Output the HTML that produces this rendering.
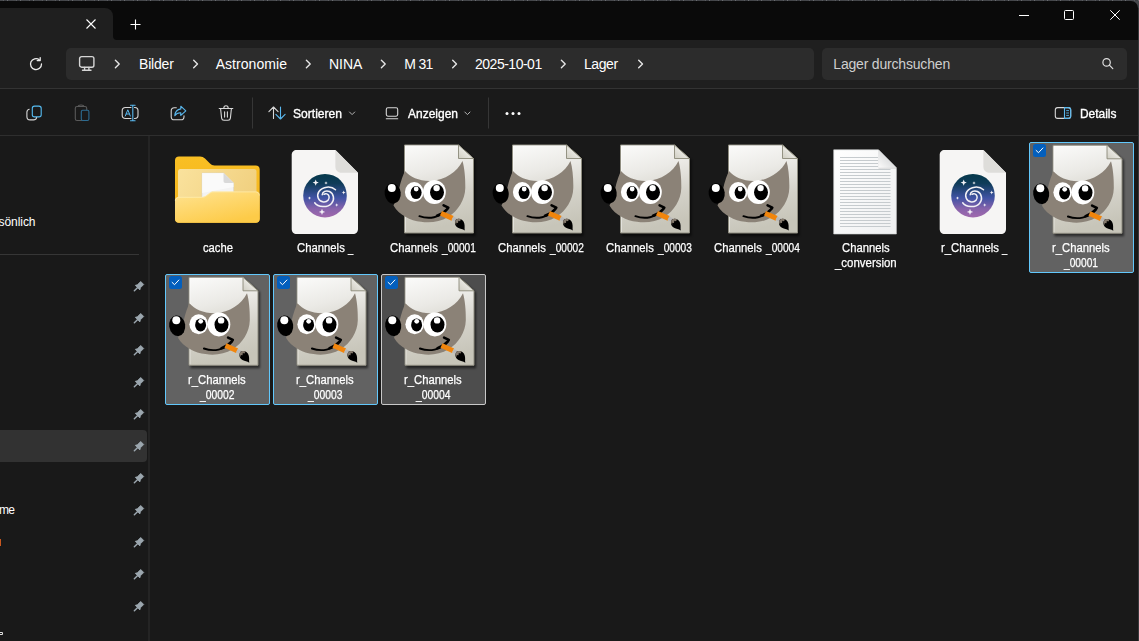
<!DOCTYPE html>
<html lang="de">
<head>
<meta charset="utf-8">
<title>Lager</title>
<style>
html,body{margin:0;padding:0;background:#191919;}
body{width:1139px;height:641px;overflow:hidden;font-family:"Liberation Sans",sans-serif;}
#win{position:relative;width:1139px;height:641px;overflow:hidden;background:#191919;}
.abs{position:absolute;}
.t{position:absolute;white-space:pre;font-family:"Liberation Sans",sans-serif;}
svg{position:absolute;overflow:visible;}
.sel{position:absolute;width:103px;height:129px;border:1px solid #62c8fc;background:#626262;border-radius:2px;}
.chk{position:absolute;width:13px;height:13px;background:#0b5cc4;border-radius:2px;}
</style>
</head>
<body>
<div id="win">
<!-- title bar -->
<div class="abs" style="left:0;top:0;width:1139px;height:40px;background:#0a0a0a;"></div>
<div class="abs" style="left:0;top:0;width:1139px;height:8px;background:#45474b;"></div>
<div class="abs" style="left:-10px;top:1px;width:1148px;height:30px;background:#0a0a0a;border-radius:0 7px 0 0;"></div>
<div class="abs" style="left:0;top:0;width:1139px;height:1px;background:repeating-linear-gradient(90deg,#47494d 0 3px,#5a5c60 3px 4px,#3c3e42 4px 7px,#6a6c70 7px 8px,#44464a 8px 13px);"></div>
<!-- active tab -->
<div class="abs" style="left:-10px;top:8px;width:123px;height:34px;background:#1f1f1f;border-radius:8px 8px 0 0;"></div>
<svg style="left:113px;top:36px" width="4" height="4" viewBox="0 0 4 4"><path d="M0 0 A4 4 0 0 0 4 4 L0 4Z" fill="#1f1f1f"/></svg>
<!-- nav bar + toolbar background -->
<div class="abs" style="left:0;top:40px;width:1139px;height:48px;background:#1f1f1f;"></div>
<div class="abs" style="left:0;top:88px;width:1139px;height:1px;background:#333;"></div>
<div class="abs" style="left:0;top:89px;width:1139px;height:46px;background:#1a1a1a;"></div>
<div class="abs" style="left:0;top:135px;width:1139px;height:1px;background:#2e2e2e;"></div>
<!-- tab close / new tab -->
<svg style="left:86px;top:19px" width="10" height="10" viewBox="0 0 10 10"><path d="M0.5 0.5L9.5 9.5M9.5 0.5L0.5 9.5" stroke="#fff" stroke-width="1.1" fill="none"/></svg>
<svg style="left:130px;top:19px" width="11" height="11" viewBox="0 0 11 11"><path d="M5.5 0.5V10.5M0.5 5.5H10.5" stroke="#fff" stroke-width="1.1" fill="none"/></svg>
<!-- window controls -->
<svg style="left:1019px;top:15px" width="10" height="1" viewBox="0 0 10 1"><rect width="10" height="1" fill="#fff"/></svg>
<svg style="left:1064px;top:10px" width="10" height="10" viewBox="0 0 10 10"><rect x="0.5" y="0.5" width="9" height="9" rx="1" fill="none" stroke="#fff" stroke-width="1"/></svg>
<svg style="left:1110px;top:10px" width="10" height="10" viewBox="0 0 10 10"><path d="M0.3 0.3L9.7 9.7M9.7 0.3L0.3 9.7" stroke="#fff" stroke-width="1" fill="none"/></svg>
<!-- address + search -->
<div class="abs" style="left:66px;top:48px;width:748px;height:32px;background:#2c2c2c;border-radius:5px;"></div>
<div class="abs" style="left:822px;top:48px;width:305px;height:32px;background:#2c2c2c;border-radius:5px;"></div>
<!-- refresh -->
<svg style="left:29px;top:57px" width="14" height="14" viewBox="0 0 14 14"><path d="M12.500 7A5.500 5.500 0 1 1 10.300 2.700" fill="none" stroke="#ececec" stroke-width="1.300" stroke-linecap="round"/><path d="M11.200 0.600V3.600H8.200" fill="none" stroke="#ececec" stroke-width="1.300" stroke-linecap="round" stroke-linejoin="round"/></svg>
<!-- monitor -->
<svg style="left:79px;top:56px" width="16" height="15" viewBox="0 0 16 15"><rect x="0.6" y="0.6" width="14.3" height="10.6" rx="2" fill="none" stroke="#d6d6d6" stroke-width="1.400"/><path d="M3.5 14.2H12M5.6 11.4V14M9.9 11.4V14" stroke="#d6d6d6" stroke-width="1.400" fill="none" stroke-linecap="round"/></svg>
<!-- chevrons -->
<svg style="left:0;top:0" width="1139" height="100" viewBox="0 0 1139 100"><g fill="none" stroke="#e6e6e6" stroke-width="1.400" stroke-linecap="round" stroke-linejoin="round" transform="translate(0.400 0)">
<path d="M115 60.3l3.8 3.7l-3.8 3.7"/><path d="M193.3 60.3l3.8 3.7l-3.8 3.7"/><path d="M306 60.3l3.8 3.7l-3.8 3.7"/><path d="M381 60.3l3.8 3.7l-3.8 3.7"/><path d="M452.3 60.3l3.8 3.7l-3.8 3.7"/><path d="M561 60.3l3.8 3.7l-3.8 3.7"/><path d="M638.3 60.3l3.8 3.7l-3.8 3.7"/>
</g>
<!-- search icon -->
<g fill="none" stroke="#e0e0e0" stroke-width="1.2" stroke-linecap="round"><circle cx="1106.6" cy="62.4" r="3.7"/><path d="M1109.4 65.2L1112.8 68.6"/></g>
</svg>
<!-- toolbar icons -->
<svg style="left:0;top:0" width="1139" height="140" viewBox="0 0 1139 140">
<!-- copy -->
<g fill="none" stroke-width="1.1" stroke-linejoin="round" stroke-linecap="round">
<rect x="32.300" y="106.100" width="8.900" height="10.800" rx="2.200" stroke="#56bdf3"/>
<path d="M29.2 109.2c-1.6 0.3-2.3 1.4-2.3 3v4.6c0 1.9 1.2 3.1 3.1 3.1h3.6c1.6 0 2.7-0.8 3-2.3" stroke="#d8d8d8"/>
<!-- paste (disabled) -->
<rect x="75.300" y="106.500" width="11.400" height="14" rx="1.800" stroke="#5a5a5a"/>
<path d="M78.200 106.500c0-1 1-1.500 2.800-1.500s2.800 0.500 2.800 1.500" stroke="#5a5a5a"/>
<rect x="81.300" y="110.300" width="7.600" height="10.200" rx="1.400" stroke="#2d6b90" fill="#1a1a1a"/>
<!-- rename -->
<path d="M131 107.5h-5.5c-2 0-3.3 1.2-3.3 3.2v4.6c0 2 1.3 3.2 3.3 3.2h5.5M134.5 107.5h0.4c2 0 3.1 1.2 3.1 3.2v4.6c0 2-1.1 3.2-3.1 3.2h-0.4" stroke="#d8d8d8"/>
<path d="M130.5 105.3h4.6M130.5 120.7h4.6M132.8 105.3v15.4" stroke="#5ab8ee"/>
<path d="M125.3 116l2.5-6.2l2.5 6.2M126.2 114h3.2" stroke="#5ab8ee" stroke-width="1"/>
<!-- share -->
<path d="M176.300 107.800h-2c-2 0-3.100 1.100-3.100 3.100v5.800c0 2 1.100 3.100 3.100 3.100h6.600c2 0 3.100-1.100 3.100-3.100v-0.800" stroke="#d8d8d8"/>
<path d="M180.8 106.2l5 4.6l-5 4.6v-2.6c-2.8-0.1-4.6 0.8-6 2.9c0.3-3.6 2.2-6.3 6-6.8z" stroke="#5ab8ee"/>
<!-- delete -->
<path d="M219.2 108.5h13.6M223.8 108.2c0-1.6 1-2.5 2.2-2.5s2.2 0.9 2.2 2.5M220.6 108.8l1 9.3c0.2 1.4 1 2.1 2.3 2.1h4.2c1.3 0 2.1-0.7 2.3-2.1l1-9.3M224.6 111.8v5.3M227.4 111.8v5.3" stroke="#d8d8d8"/>
<!-- sort -->
<path d="M273.500 107l-4.600 4.600M273.500 107l4.600 4.600M273.500 107v11.500" stroke="#d8d8d8"/>
<path d="M280.500 119l-4.600-4.600M280.500 119l4.600-4.600M280.500 119v-12" stroke="#5ab8ee"/>
<!-- view -->
<rect x="386.300" y="107.800" width="11.400" height="8.400" rx="1.600" stroke="#d8d8d8"/>
<path d="M386.300 118.800h11.400" stroke="#d8d8d8"/>
<!-- small chevrons -->
<path d="M349.5 112l2.6 2.6l2.6-2.6M464.8 112l2.6 2.6l2.6-2.6" stroke="#b4b4b4" stroke-width="1"/>
<!-- details -->
<rect x="1055.3" y="107.6" width="15.4" height="10.8" rx="2.4" stroke="#d8d8d8"/>
<path d="M1064.5 107.6h3.8c1.5 0 2.4 0.9 2.4 2.4v6c0 1.5-0.9 2.4-2.4 2.4h-3.8z" stroke="#5ab8ee"/>
<path d="M1066.6 110.6h2M1066.6 113h2M1066.6 115.4h2" stroke="#5ab8ee" stroke-width="0.9"/>
</g>
<circle cx="507" cy="113.500" r="1.500" fill="#fff"/><circle cx="513" cy="113.500" r="1.500" fill="#fff"/><circle cx="519" cy="113.500" r="1.500" fill="#fff"/>
<rect x="252" y="97.500" width="1" height="31" fill="#363636"/><rect x="488" y="97.500" width="1" height="31" fill="#363636"/>
</svg>
<div class="abs" style="left:1138px;top:8px;width:1px;height:633px;background:#38393c;"></div>
<!-- sidebar -->
<div class="abs" style="left:0;top:136px;width:148px;height:505px;background:#191919;"></div>
<div class="abs" style="left:148px;top:136px;width:2px;height:505px;background:#242424;"></div>
<div class="abs" style="left:0;top:254px;width:139px;height:1px;background:#363636;"></div>
<div class="abs" style="left:-6px;top:430px;width:153px;height:32px;background:#323232;border-radius:4px;"></div>
<svg style="left:0;top:0" width="160" height="641" viewBox="0 0 160 641">
<defs><g id="pin"><g transform="translate(3.900 2.300) scale(0.860) translate(-3 -2)"><path d="M1.200 0.300L5.100 -3.600L8.600 -0.100L4.700 3.800L4.100 6.200L-1.200 0.900Z" fill="#9ba6ae" stroke="#9ba6ae" stroke-width="1" stroke-linejoin="round"/><path d="M1.600 3.300L-2.300 7.200" fill="none" stroke="#9ba6ae" stroke-width="1.700" stroke-linecap="round"/></g></g></defs>
<use href="#pin" x="135" y="284"/><use href="#pin" x="135" y="316"/><use href="#pin" x="135" y="348"/><use href="#pin" x="135" y="380"/><use href="#pin" x="135" y="412"/><use href="#pin" x="135" y="444"/><use href="#pin" x="135" y="476"/><use href="#pin" x="135" y="508"/><use href="#pin" x="135" y="540"/><use href="#pin" x="135" y="572"/><use href="#pin" x="135" y="604"/>
<rect x="0" y="539" width="1" height="7" fill="#c9571f"/>
<path d="M0 632.500h2.500v2h-2.500" fill="none" stroke="#ddd" stroke-width="1"/>
</svg>
<svg style="left:0;top:0" width="0" height="0">
<defs>
<linearGradient id="pg" x1="0" y1="0" x2="0.2" y2="1"><stop offset="0" stop-color="#fbfbfa"/><stop offset="0.35" stop-color="#ebeae6"/><stop offset="0.7" stop-color="#d3d1c8"/><stop offset="1" stop-color="#c7c5b9"/></linearGradient>
<linearGradient id="pgfold" x1="0" y1="1" x2="1" y2="0"><stop offset="0" stop-color="#cfcdc1"/><stop offset="0.450" stop-color="#e6e5df"/><stop offset="1" stop-color="#f2f1ec"/></linearGradient>
<filter id="sh" x="-20%" y="-20%" width="150%" height="150%"><feGaussianBlur stdDeviation="1.3"/></filter>
<linearGradient id="gal" x1="0" y1="0" x2="0" y2="1"><stop offset="0" stop-color="#05384a"/><stop offset="0.22" stop-color="#0f3c59"/><stop offset="0.55" stop-color="#4053a4"/><stop offset="0.8" stop-color="#8763ab"/><stop offset="1" stop-color="#a169ad"/></linearGradient>
<linearGradient id="fback" x1="0" y1="0" x2="0" y2="1"><stop offset="0" stop-color="#f9bf23"/><stop offset="1" stop-color="#f2b21c"/></linearGradient>
<linearGradient id="finner" x1="0" y1="0" x2="1" y2="0.3"><stop offset="0" stop-color="#fae29d"/><stop offset="1" stop-color="#f1d181"/></linearGradient>
<linearGradient id="ffront" x1="0" y1="0" x2="0.6" y2="1"><stop offset="0" stop-color="#ffe391"/><stop offset="1" stop-color="#fdcb48"/></linearGradient>
<linearGradient id="tdoc" x1="0" y1="0" x2="1" y2="1"><stop offset="0" stop-color="#ffffff"/><stop offset="1" stop-color="#eff0f1"/></linearGradient>
<linearGradient id="tfold" x1="0" y1="1" x2="1" y2="0"><stop offset="0" stop-color="#fbfbfb"/><stop offset="0.5" stop-color="#dfe0e1"/><stop offset="1" stop-color="#c8c9ca"/></linearGradient>

<symbol id="gimp" viewBox="0 0 96 96" overflow="visible">
 <path d="M21 4H75L90.500 17V93H21Z" fill="#000" opacity="0.55" filter="url(#sh)"/>
 <path d="M19.500 2H73.500L88.500 15.500V90H19.500Z" fill="url(#pg)" stroke="#8f8d80" stroke-width="1" stroke-linejoin="round"/>
 <path d="M20.500 89V3H73.600" fill="none" stroke="#fff" stroke-opacity="0.45" stroke-width="1"/>
 <path d="M73.500 2V15.500H88.500Z" fill="url(#pgfold)" stroke="#8a8978" stroke-width="0.900" stroke-linejoin="round"/>
 <path d="M20 28C25 34 35 38.500 46 38C60 37 72 29 77.500 18C79.500 25 80.500 35 80.300 45C80 57 73 68 63 74C55 79 45 80.200 36 78.800C25.500 77.800 14 72 8.500 62.500L13.500 50C14.500 42 17.500 33 20 28Z" fill="#8b8277"/>
 <ellipse cx="7.700" cy="50.400" rx="8" ry="10.300" fill="#000" transform="rotate(-8 7.700 50.400)"/>
 <circle cx="6.800" cy="44.900" r="4" fill="#fff"/>
 <ellipse cx="29.200" cy="49" rx="9.300" ry="10" fill="#fff"/>
 <ellipse cx="49.400" cy="49" rx="11.400" ry="12.100" fill="#fff"/>
 <ellipse cx="31.100" cy="49.600" rx="5.500" ry="6.500" fill="#000"/>
 <circle cx="31.200" cy="46" r="2.400" fill="#fff"/>
 <ellipse cx="52" cy="49.300" rx="7" ry="8" fill="#000"/>
 <circle cx="51.600" cy="45.100" r="3.200" fill="#fff"/>
 <path d="M34.400 73.200C43 76.200 55.500 75.500 62.600 65.800" fill="none" stroke="#000" stroke-width="1.900" stroke-linecap="round"/><path d="M52 72.800C56.500 71.300 60 68.800 62.600 65.800" fill="none" stroke="#000" stroke-width="2.500" stroke-linecap="round"/>
 <path d="M58.600 62.300L63.300 64.600" fill="none" stroke="#000" stroke-width="2.600" stroke-linecap="round"/>
 <path d="M56 70.200L67.600 75.400" stroke="#f1850c" stroke-width="5" fill="none"/>
 <path d="M67.400 75.300L71.400 77.300" stroke="#b9b9b9" stroke-width="3.800" fill="none"/>
 <path d="M71 76.500C74 74.500 78.500 76.500 79.300 80.500C80 83.500 79.300 85 79.800 87.500C77.500 85.700 75.500 85.800 73 84.700C70 83.300 69 79.500 71 76.500Z" fill="#000"/>
 <path d="M70.600 77.200C72 75.700 74.300 75.300 76 76.300L75 78.200L73.300 77.800L73 80L71.200 79.800L71.300 81.800C70 80.500 69.800 78.500 70.600 77.200Z" fill="#857a6d"/>
</symbol>

<symbol id="galaxy" viewBox="0 0 96 96" overflow="visible">
 <path d="M19.700 7.100H58.400L81 29.700V86c0 3-2 5-5 5H19.700c-3 0-5-2-5-5V12.100c0-3 2-5 5-5Z" fill="#f6f5f4"/>
 <path d="M58.400 7.100L81 29.700H64.400c-3.600 0-6-2.400-6-6Z" fill="#deddda"/>
 <circle cx="48" cy="52.700" r="21.800" fill="url(#gal)"/>
 <g fill="none" stroke="#f3f1f6" stroke-width="1.500" stroke-linecap="round">
  <path d="M58.500 46.800C54 42.500 45.500 43.500 42 48.500C39 53 41.500 58.500 46.500 59C50.500 59.300 52.800 56 52 53.200C51.300 50.800 48.600 50 47 51.300"/>
  <path d="M37.700 59.800C41 64.500 50.500 65 54.500 60.500C58 56.500 56.700 50.500 52.500 48.500C49 46.900 45.500 48.800 45.200 51.800"/>
 </g>
 <g fill="#f3f1f6">
  <path d="M38.700 36.500l0.900 2.200l2.200 0.900l-2.200 0.900l-0.900 2.200l-0.900-2.200l-2.200-0.900l2.200-0.900Z"/>
  <path d="M45 65.700l0.900 2.300l2.300 0.900l-2.300 0.900l-0.900 2.300l-0.900-2.300l-2.300-0.900l2.300-0.900Z"/>
  <path d="M49 38.200l0.500 1.200l1.200 0.500l-1.200 0.500l-0.500 1.200l-0.500-1.200l-1.200-0.500l1.200-0.500Z"/>
  <path d="M66.700 47.500l0.600 1.400l1.400 0.600l-1.400 0.600l-0.600 1.400l-0.600-1.400l-1.400-0.600l1.400-0.600Z"/>
  <path d="M32.500 53.500l0.500 1.100l1.100 0.500l-1.100 0.500l-0.500 1.100l-0.500-1.100l-1.100-0.500l1.100-0.500Z"/>
  <path d="M59.700 60.300l0.500 1.200l1.200 0.500l-1.200 0.500l-0.500 1.200l-0.500-1.200l-1.200-0.500l1.200-0.500Z"/>
 </g>
</symbol>

<symbol id="txt" viewBox="0 0 96 96" overflow="visible">
 <path d="M16.700 6.800H61.500L79.400 24.700V91H16.700Z" fill="url(#tdoc)" stroke="#cfd0d1" stroke-width="0.6"/>
 <g stroke="#c6cbce" stroke-width="1"><path d="M23 14.5H61M23 17.5H61M23 20.5H61M23 23.5H61M23 26.5H73.5M23 29.5H73.5M23 32.5H73.5M23 35.5H73.5M23 38.5H73.5M23 41.5H73.5M23 44.5H73.5M23 47.5H73.5M23 50.5H73.5M23 53.5H73.5M23 56.5H73.5M23 59.5H73.5M23 62.5H73.5M23 65.5H73.5M23 68.5H73.5M23 71.5H73.5M23 74.5H73.5M23 77.5H73.5M23 80.5H73.5M23 83.5H73.5"/></g>
 <path d="M61.500 6.800L79.400 24.700L79.400 25.700H61.500Z" fill="#000" opacity="0.12"/>
 <path d="M61.500 6.800L79.400 24.700H61.500Z" fill="url(#tfold)"/>
</symbol>

<symbol id="folder" viewBox="0 0 96 96" overflow="visible">
 <path d="M10 13.400H31c2.200 0 3.500 0.700 5 2.200l5 5c1.300 1.300 2.500 2 4.500 2H86.700c2.500 0 4 1.500 4 4V76c0 2.300-1.600 3.700-4 3.700H10c-2.500 0-4-1.500-4-3.700V17.400c0-2.500 1.500-4 4-4Z" fill="url(#fback)"/>
 <rect x="9" y="26" width="78.500" height="40" rx="2.500" fill="url(#finner)"/>
 <path d="M33 30H54.500L64.600 40V58H33Z" fill="#f3f3f3" stroke="#d0d0d0" stroke-width="0.500"/>
 <path d="M33 30H54.500L64.600 40V44L33 50Z" fill="#fff" opacity="0.6"/>
 <path d="M54.500 30L64.600 40H56.500c-1.300 0-2-0.700-2-2Z" fill="#d9d9d9"/>
 <path d="M6 58c0-2.500 1.500-4 4-4H33c2 0 3-0.500 4.500-1.700l3-2.300c1.500-1 2.500-1.400 4.500-1.400H86.700c2.500 0 4 1.500 4 4V75.700c0 2.500-1.500 4-4 4H10c-2.500 0-4-1.500-4-4Z" fill="url(#ffront)"/>
 <path d="M6.300 57.800c0-2.300 1.500-3.500 3.700-3.500H33c2 0 3.200-0.500 4.700-1.700l2.900-2.300c1.400-1 2.500-1.400 4.400-1.400H86.700c2.200 0 3.700 1.300 3.700 3.600" fill="none" stroke="#fff3c4" stroke-width="0.7" opacity="0.8"/>
</symbol>
</defs>
</svg>
<!-- selection boxes -->
<div class="sel" style="left:1029px;top:142px;"></div>
<div class="sel" style="left:165px;top:274px;"></div>
<div class="sel" style="left:273px;top:274px;"></div>
<div class="sel" style="left:381px;top:274px;background:#4d4d4d;border-color:#c8c8c8;"></div>
<svg style="left:0;top:0" width="1139" height="641" viewBox="0 0 1139 641">
<use href="#folder" x="169" y="143" width="96" height="96"/>
<use href="#galaxy" x="277" y="143" width="96" height="96"/>
<use href="#gimp" x="385" y="143" width="96" height="96"/>
<use href="#gimp" x="493" y="143" width="96" height="96"/>
<use href="#gimp" x="601" y="143" width="96" height="96"/>
<use href="#gimp" x="709" y="143" width="96" height="96"/>
<use href="#txt" x="817" y="143" width="96" height="96"/>
<use href="#galaxy" x="925" y="143" width="96" height="96"/>
<use href="#gimp" x="1033.500" y="143.300" width="96" height="96"/>
<use href="#gimp" x="169.500" y="275.300" width="96" height="96"/>
<use href="#gimp" x="277.500" y="275.300" width="96" height="96"/>
<use href="#gimp" x="385.500" y="275.300" width="96" height="96"/>
<g id="chk1"><rect x="1033" y="144" width="13" height="13" rx="2.500" fill="#035fbd"/><path d="M1036.100 150.400l2.400 2.300l4.400-4.700" fill="none" stroke="#fff" stroke-width="1" stroke-linecap="round" stroke-linejoin="round"/></g>
<use href="#chk1" x="-864" y="132"/><use href="#chk1" x="-756" y="132"/><use href="#chk1" x="-648" y="132"/>
</svg>
<span class="t" style="left:139.00px;top:57.15px;font-size:14px;line-height:14px;letter-spacing:-0.183px;color:#fff;font-weight:400;">Bilder</span>
<span class="t" style="left:215.70px;top:57.15px;font-size:14px;line-height:14px;letter-spacing:0.049px;color:#fff;font-weight:400;">Astronomie</span>
<span class="t" style="left:329.00px;top:57.15px;font-size:14px;line-height:14px;letter-spacing:-0.038px;color:#fff;font-weight:400;">NINA</span>
<span class="t" style="left:404.30px;top:57.15px;font-size:14px;line-height:14px;letter-spacing:-0.681px;color:#fff;font-weight:400;">M 31</span>
<span class="t" style="left:475.00px;top:57.15px;font-size:14px;line-height:14px;letter-spacing:-0.492px;color:#fff;font-weight:400;">2025-10-01</span>
<span class="t" style="left:584.00px;top:57.15px;font-size:14px;line-height:14px;letter-spacing:-0.422px;color:#fff;font-weight:400;">Lager</span>
<span class="t" style="left:833.30px;top:57.15px;font-size:14px;line-height:14px;letter-spacing:-0.187px;color:#cfcfcf;font-weight:400;">Lager durchsuchen</span>
<span class="t" style="left:293.00px;top:107.92px;font-size:12.5px;line-height:12.5px;letter-spacing:0.000px;color:#fff;font-weight:400;transform-origin:0 0;transform:scaleX(0.9658);-webkit-text-stroke:0.35px #fff;">Sortieren</span>
<span class="t" style="left:408.00px;top:107.92px;font-size:12.5px;line-height:12.5px;letter-spacing:0.000px;color:#fff;font-weight:400;transform-origin:0 0;transform:scaleX(0.9592);-webkit-text-stroke:0.35px #fff;">Anzeigen</span>
<span class="t" style="left:1079.80px;top:107.92px;font-size:12.5px;line-height:12.5px;letter-spacing:0.000px;color:#fff;font-weight:400;transform-origin:0 0;transform:scaleX(0.9550);-webkit-text-stroke:0.35px #fff;">Details</span>
<span class="t" style="left:-1.50px;top:215.84px;font-size:12px;line-height:12px;letter-spacing:-0.051px;color:#fff;font-weight:400;">sönlich</span>
<span class="t" style="left:-1.00px;top:503.84px;font-size:12px;line-height:12px;letter-spacing:-0.836px;color:#fff;font-weight:400;">me</span>
<span class="t" style="left:202.70px;top:242.42px;font-size:12.5px;line-height:12.5px;letter-spacing:0.000px;color:#fff;font-weight:400;transform-origin:0 0;transform:scaleX(0.8993);-webkit-text-stroke:0.25px #fff;">cache</span>
<span class="t" style="left:297.30px;top:242.42px;font-size:12.5px;line-height:12.5px;letter-spacing:0.000px;color:#fff;font-weight:400;transform-origin:0 0;transform:scaleX(0.9048);-webkit-text-stroke:0.25px #fff;">Channels</span>
<span class="t" style="left:348.30px;top:242.42px;font-size:12.5px;line-height:12.5px;letter-spacing:0.000px;color:#fff;font-weight:400;transform-origin:0 0;transform:scaleX(0.7479);-webkit-text-stroke:0.25px #fff;">_</span>
<span class="t" style="left:390.00px;top:242.42px;font-size:12.5px;line-height:12.5px;letter-spacing:0.000px;color:#fff;font-weight:400;transform-origin:0 0;transform:scaleX(0.9048);-webkit-text-stroke:0.25px #fff;">Channels</span>
<span class="t" style="left:441.70px;top:242.42px;font-size:12.5px;line-height:12.5px;letter-spacing:0.000px;color:#fff;font-weight:400;transform-origin:0 0;transform:scaleX(0.8102);-webkit-text-stroke:0.25px #fff;">_00001</span>
<span class="t" style="left:498.00px;top:242.42px;font-size:12.5px;line-height:12.5px;letter-spacing:0.000px;color:#fff;font-weight:400;transform-origin:0 0;transform:scaleX(0.9048);-webkit-text-stroke:0.25px #fff;">Channels</span>
<span class="t" style="left:549.70px;top:242.42px;font-size:12.5px;line-height:12.5px;letter-spacing:0.000px;color:#fff;font-weight:400;transform-origin:0 0;transform:scaleX(0.8102);-webkit-text-stroke:0.25px #fff;">_00002</span>
<span class="t" style="left:606.00px;top:242.42px;font-size:12.5px;line-height:12.5px;letter-spacing:0.000px;color:#fff;font-weight:400;transform-origin:0 0;transform:scaleX(0.9048);-webkit-text-stroke:0.25px #fff;">Channels</span>
<span class="t" style="left:657.70px;top:242.42px;font-size:12.5px;line-height:12.5px;letter-spacing:0.000px;color:#fff;font-weight:400;transform-origin:0 0;transform:scaleX(0.8102);-webkit-text-stroke:0.25px #fff;">_00003</span>
<span class="t" style="left:714.00px;top:242.42px;font-size:12.5px;line-height:12.5px;letter-spacing:0.000px;color:#fff;font-weight:400;transform-origin:0 0;transform:scaleX(0.9048);-webkit-text-stroke:0.25px #fff;">Channels</span>
<span class="t" style="left:765.70px;top:242.42px;font-size:12.5px;line-height:12.5px;letter-spacing:0.000px;color:#fff;font-weight:400;transform-origin:0 0;transform:scaleX(0.8102);-webkit-text-stroke:0.25px #fff;">_00004</span>
<span class="t" style="left:841.70px;top:242.42px;font-size:12.5px;line-height:12.5px;letter-spacing:0.000px;color:#fff;font-weight:400;transform-origin:0 0;transform:scaleX(0.9010);-webkit-text-stroke:0.25px #fff;">Channels</span>
<span class="t" style="left:835.00px;top:257.42px;font-size:12.5px;line-height:12.5px;letter-spacing:0.000px;color:#fff;font-weight:400;transform-origin:0 0;transform:scaleX(0.9153);-webkit-text-stroke:0.25px #fff;">_conversion</span>
<span class="t" style="left:941.30px;top:242.42px;font-size:12.5px;line-height:12.5px;letter-spacing:0.000px;color:#fff;font-weight:400;transform-origin:0 0;transform:scaleX(0.9071);-webkit-text-stroke:0.25px #fff;">r_Channels</span>
<span class="t" style="left:1001.50px;top:242.42px;font-size:12.5px;line-height:12.5px;letter-spacing:0.000px;color:#fff;font-weight:400;transform-origin:0 0;transform:scaleX(0.7479);-webkit-text-stroke:0.25px #fff;">_</span>
<span class="t" style="left:1052.00px;top:242.42px;font-size:12.5px;line-height:12.5px;letter-spacing:0.000px;color:#fff;font-weight:400;transform-origin:0 0;transform:scaleX(0.9024);-webkit-text-stroke:0.25px #fff;">r_Channels</span>
<span class="t" style="left:1064.30px;top:257.42px;font-size:12.5px;line-height:12.5px;letter-spacing:0.000px;color:#fff;font-weight:400;transform-origin:0 0;transform:scaleX(0.8150);-webkit-text-stroke:0.25px #fff;">_00001</span>
<span class="t" style="left:188.00px;top:374.42px;font-size:12.5px;line-height:12.5px;letter-spacing:0.000px;color:#fff;font-weight:400;transform-origin:0 0;transform:scaleX(0.9024);-webkit-text-stroke:0.25px #fff;">r_Channels</span>
<span class="t" style="left:200.00px;top:389.42px;font-size:12.5px;line-height:12.5px;letter-spacing:0.000px;color:#fff;font-weight:400;transform-origin:0 0;transform:scaleX(0.8270);-webkit-text-stroke:0.25px #fff;">_00002</span>
<span class="t" style="left:296.00px;top:374.42px;font-size:12.5px;line-height:12.5px;letter-spacing:0.000px;color:#fff;font-weight:400;transform-origin:0 0;transform:scaleX(0.9024);-webkit-text-stroke:0.25px #fff;">r_Channels</span>
<span class="t" style="left:308.00px;top:389.42px;font-size:12.5px;line-height:12.5px;letter-spacing:0.000px;color:#fff;font-weight:400;transform-origin:0 0;transform:scaleX(0.8270);-webkit-text-stroke:0.25px #fff;">_00003</span>
<span class="t" style="left:404.00px;top:374.42px;font-size:12.5px;line-height:12.5px;letter-spacing:0.000px;color:#fff;font-weight:400;transform-origin:0 0;transform:scaleX(0.9024);-webkit-text-stroke:0.25px #fff;">r_Channels</span>
<span class="t" style="left:416.00px;top:389.42px;font-size:12.5px;line-height:12.5px;letter-spacing:0.000px;color:#fff;font-weight:400;transform-origin:0 0;transform:scaleX(0.8270);-webkit-text-stroke:0.25px #fff;">_00004</span>
</div>
</body>
</html>
